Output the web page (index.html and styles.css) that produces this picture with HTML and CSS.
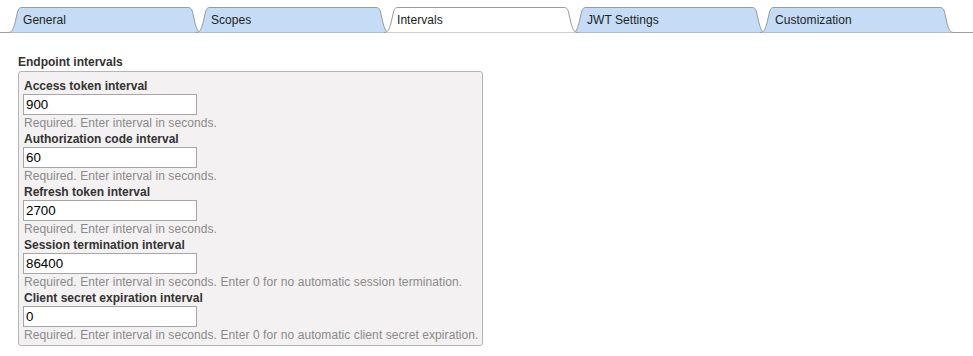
FILE: index.html
```html
<!DOCTYPE html>
<html>
<head>
<meta charset="utf-8">
<link rel="stylesheet" href="styles.css">
</head>
<body>
<div class="tabbar">
  <div class="tab"><svg class="tabshape" width="194" height="26" viewBox="0 0 194 26"><path d="M0,25.5 C4,25.5 5,23 7,16 L9.5,5 C10.5,1.5 11.5,0.5 14,0.5 L180,0.5 C182.5,0.5 183.5,1.5 184.5,5 L187,16 C189,23 190,25.5 194,25.5"/></svg><span>General</span></div>
  <div class="tab"><svg class="tabshape" width="194" height="26" viewBox="0 0 194 26"><path d="M0,25.5 C4,25.5 5,23 7,16 L9.5,5 C10.5,1.5 11.5,0.5 14,0.5 L180,0.5 C182.5,0.5 183.5,1.5 184.5,5 L187,16 C189,23 190,25.5 194,25.5"/></svg><span>Scopes</span></div>
  <div class="tab active"><svg class="tabshape" width="194" height="26" viewBox="0 0 194 26"><path d="M0,25.5 C4,25.5 5,23 7,16 L9.5,5 C10.5,1.5 11.5,0.5 14,0.5 L180,0.5 C182.5,0.5 183.5,1.5 184.5,5 L187,16 C189,23 190,25.5 194,25.5"/></svg><span>Intervals</span></div>
  <div class="tab"><svg class="tabshape" width="194" height="26" viewBox="0 0 194 26"><path d="M0,25.5 C4,25.5 5,23 7,16 L9.5,5 C10.5,1.5 11.5,0.5 14,0.5 L180,0.5 C182.5,0.5 183.5,1.5 184.5,5 L187,16 C189,23 190,25.5 194,25.5"/></svg><span>JWT Settings</span></div>
  <div class="tab"><svg class="tabshape" width="194" height="26" viewBox="0 0 194 26"><path d="M0,25.5 C4,25.5 5,23 7,16 L9.5,5 C10.5,1.5 11.5,0.5 14,0.5 L180,0.5 C182.5,0.5 183.5,1.5 184.5,5 L187,16 C189,23 190,25.5 194,25.5"/></svg><span>Customization</span></div>
</div>

<div class="section">
  <div class="section-title">Endpoint intervals</div>
  <div class="box">
    <div class="group">
      <div class="label">Access token interval</div>
      <input class="field" type="text" value="900">
      <div class="help">Required. Enter interval in seconds.</div>
    </div>
    <div class="group">
      <div class="label">Authorization code interval</div>
      <input class="field" type="text" value="60">
      <div class="help">Required. Enter interval in seconds.</div>
    </div>
    <div class="group">
      <div class="label">Refresh token interval</div>
      <input class="field" type="text" value="2700">
      <div class="help">Required. Enter interval in seconds.</div>
    </div>
    <div class="group">
      <div class="label">Session termination interval</div>
      <input class="field" type="text" value="86400">
      <div class="help">Required. Enter interval in seconds. Enter 0 for no automatic session termination.</div>
    </div>
    <div class="group">
      <div class="label">Client secret expiration interval</div>
      <input class="field" type="text" value="0">
      <div class="help">Required. Enter interval in seconds. Enter 0 for no automatic client secret expiration.</div>
    </div>
  </div>
</div>
</body>
</html>
```
FILE: styles.css
```css
html, body {
  margin: 0;
  padding: 0;
  background: #ffffff;
  font-family: "Liberation Sans", Arial, sans-serif;
  font-size: 12px;
  color: #333333;
}

.tabbar {
  display: flex;
  padding: 7px 0 0 8px;
  border-bottom: 1px solid #9e9e9e;
}

.tab {
  position: relative;
  width: 194px;
  height: 25px;
  flex: none;
  margin-left: -6px;
  z-index: 1;
}

.tab:first-child {
  margin-left: 0;
}

.tab.active {
  z-index: 2;
}

.tabshape {
  position: absolute;
  left: 0;
  top: 0;
  display: block;
}

.tabshape path {
  fill: #c5dcf6;
  stroke: #9a9a9a;
  stroke-width: 1;
}

.tab.active .tabshape path {
  fill: #ffffff;
}

.tab span {
  position: relative;
  display: block;
  padding: 6px 0 0 15px;
  line-height: 14px;
  color: #222222;
  letter-spacing: 0.05px;
}

.tab.active span {
  padding-left: 13px;
}

.section {
  padding: 22px 0 0 18px;
}

.section-title {
  font-weight: bold;
  line-height: 14px;
  margin-bottom: 2px;
  color: #333333;
}

.box {
  width: 465px;
  box-sizing: border-box;
  border: 1px solid #b5b5b5;
  border-radius: 3px;
  background: #f3f1f1;
  padding: 6px 4px 2px 4px;
}

.group {
  display: flex;
  flex-direction: column;
  align-items: flex-start;
}

.label {
  font-weight: bold;
  line-height: 16px;
  padding-left: 1px;
  color: #333333;
}

.field {
  width: 174px;
  height: 21px;
  box-sizing: border-box;
  margin: 0;
  border: 1px solid #a6a6a6;
  border-radius: 0;
  background: #ffffff;
  padding: 0 2px;
  font-family: "Liberation Sans", Arial, sans-serif;
  font-size: 13.333px;
  color: #000000;
  outline: none;
}

.help {
  line-height: 16px;
  padding-left: 1px;
  color: #8a8a8a;
  letter-spacing: 0.08px;
  white-space: nowrap;
}
```
